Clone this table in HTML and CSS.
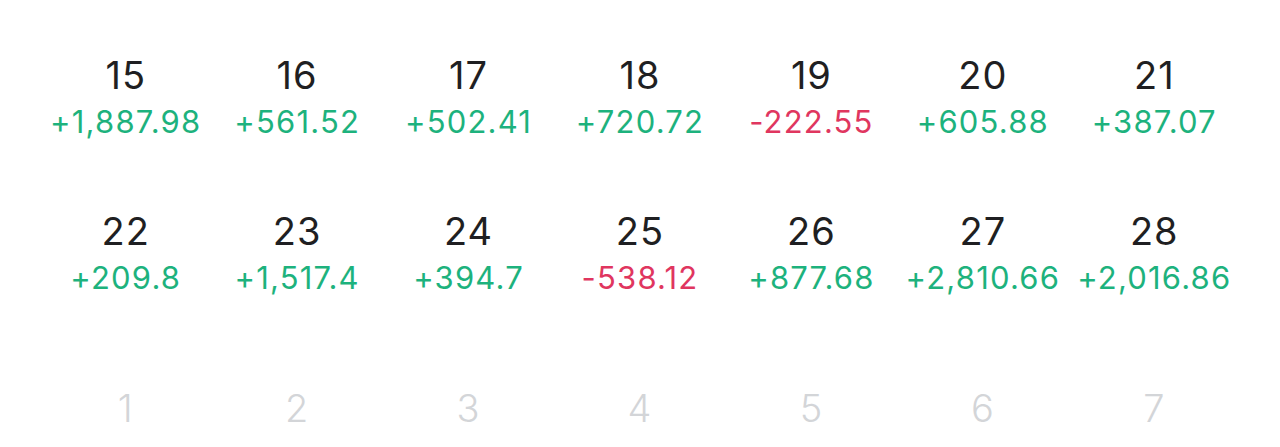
FILE: index.html
```html
<!DOCTYPE html>
<html lang="en">
<head>
<meta charset="utf-8">
<title>Calendar</title>
<link rel="stylesheet" href="styles.css">
</head>
<body>
<div class="calendar">
  <div class="cell"><span class="day">15</span><span class="pnl up">+1,887.98</span></div>
  <div class="cell"><span class="day">16</span><span class="pnl up">+561.52</span></div>
  <div class="cell"><span class="day">17</span><span class="pnl up">+502.41</span></div>
  <div class="cell"><span class="day">18</span><span class="pnl up">+720.72</span></div>
  <div class="cell"><span class="day">19</span><span class="pnl down">-222.55</span></div>
  <div class="cell"><span class="day">20</span><span class="pnl up">+605.88</span></div>
  <div class="cell"><span class="day">21</span><span class="pnl up">+387.07</span></div>

  <div class="cell"><span class="day">22</span><span class="pnl up">+209.8</span></div>
  <div class="cell"><span class="day">23</span><span class="pnl up">+1,517.4</span></div>
  <div class="cell"><span class="day">24</span><span class="pnl up">+394.7</span></div>
  <div class="cell"><span class="day">25</span><span class="pnl down">-538.12</span></div>
  <div class="cell"><span class="day">26</span><span class="pnl up">+877.68</span></div>
  <div class="cell"><span class="day">27</span><span class="pnl up">+2,810.66</span></div>
  <div class="cell"><span class="day">28</span><span class="pnl up">+2,016.86</span></div>

  <div class="cell"><span class="day muted">1</span></div>
  <div class="cell"><span class="day muted">2</span></div>
  <div class="cell"><span class="day muted">3</span></div>
  <div class="cell"><span class="day muted">4</span></div>
  <div class="cell"><span class="day muted">5</span></div>
  <div class="cell"><span class="day muted">6</span></div>
  <div class="cell"><span class="day muted">7</span></div>
</div>
</body>
</html>
```

FILE: styles.css
```css
html, body {
  margin: 0;
  padding: 0;
  background: #ffffff;
}

body {
  font-family: Inter, Roboto, "Noto Sans", sans-serif;
  height: 447px;
  overflow: hidden;
}

.calendar {
  display: grid;
  grid-template-columns: repeat(7, 1fr);
  grid-auto-rows: 156px;
  padding: 18px 40px 0;
  height: 429px;
  overflow: hidden;
}

.cell {
  display: flex;
  flex-direction: column;
  align-items: center;
  justify-content: center;
}

.day {
  font-size: 38px;
  line-height: 44px;
  letter-spacing: 1px;
  color: #1f1f22;
  font-weight: 400;
}

.day.muted {
  color: #d3d5d8;
  font-weight: 300;
}

.pnl {
  margin-top: 7px;
  font-size: 31px;
  line-height: 36px;
  letter-spacing: 1.2px;
}

.up {
  color: #1db27d;
}

.down {
  color: #e0365f;
}
```
